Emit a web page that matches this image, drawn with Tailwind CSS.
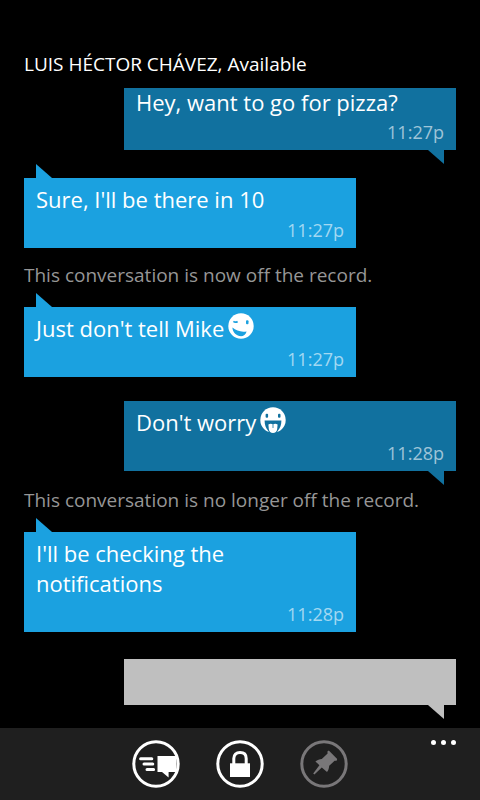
<!DOCTYPE html>
<html lang="en">
<head>
<meta charset="utf-8">
<meta name="viewport" content="width=device-width, initial-scale=1">
<title>Conversation</title>
<script src="https://cdn.jsdelivr.net/npm/@tailwindcss/browser@4"></script>
</head>
<body class="bg-black text-white font-['Open_Sans','Noto_Sans',sans-serif]">
<div class="flex min-h-screen flex-col">
  <header class="px-6 pt-[50px] pb-[10px]">
    <h1 class="text-[19px] leading-7">LUIS HÉCTOR CHÁVEZ, Available</h1>
  </header>

  <main class="flex grow flex-col px-6">
    <div class="flex flex-col">
      <article class="relative mb-[14px] ml-auto w-[332px] bg-[#11719f] px-3 pb-0.5">
        <p class="text-[22px] leading-7">Hey, want to go for pizza?</p>
        <time class="block text-right text-[18px] leading-8 text-white/60">11:27p</time>
        <svg class="absolute top-full right-3 h-[14px] w-4" viewBox="0 0 16 14" aria-hidden="true"><path d="M0 0H16V14Z" fill="#11719f"/></svg>
      </article>

      <article class="relative mt-[14px] w-[332px] bg-[#1ba1e0] px-3 pt-1.5 pb-0.5">
        <svg class="absolute bottom-full left-3 h-[14px] w-4" viewBox="0 0 16 14" aria-hidden="true"><path d="M0 0V14H16Z" fill="#1ba1e0"/></svg>
        <p class="text-[22px] leading-[30px]">Sure, I'll be there in 10</p>
        <time class="block text-right text-[18px] leading-8 text-white/60">11:27p</time>
      </article>

      <p class="mt-3 text-[19px] leading-[30px] text-[#969696]">This conversation is now off the record.</p>

      <article class="relative mt-[17px] w-[332px] bg-[#1ba1e0] px-3 pt-1.5 pb-0.5">
        <svg class="absolute bottom-full left-3 h-[14px] w-4" viewBox="0 0 16 14" aria-hidden="true"><path d="M0 0V14H16Z" fill="#1ba1e0"/></svg>
        <p class="flex gap-1 text-[22px] leading-[30px]">Just don't tell Mike
          <svg class="h-[26px] w-[26px]" viewBox="0 0 26 26" role="img" aria-label="winking smile">
            <circle cx="13" cy="13" r="12.7" fill="#fff"/>
            <path d="M5.4 8.4Q7.4 10 9.6 8.4" fill="none" stroke="#1ba1e0" stroke-width="1.8"/>
            <rect x="18" y="7.2" width="2.5" height="4" rx="1" fill="#1ba1e0"/>
            <path d="M4.4 14.6C8.4 18 13.4 19.4 18.6 18.4C17.8 22 14.6 23.7 11.4 23C7.4 22.2 4.6 18.8 4.4 14.6Z" fill="#1ba1e0"/>
          </svg>
        </p>
        <time class="block text-right text-[18px] leading-8 text-white/60">11:27p</time>
      </article>

      <article class="relative mt-6 mb-[14px] ml-auto w-[332px] bg-[#11719f] px-3 pt-1.5 pb-0.5">
        <p class="flex gap-1 text-[22px] leading-[30px]">Don't worry
          <svg class="h-[26px] w-[26px]" viewBox="0 0 26 26" role="img" aria-label="tongue out smile">
            <circle cx="13" cy="13" r="12.7" fill="#fff"/>
            <rect x="5.6" y="6.8" width="2.5" height="4" rx="1" fill="#11719f"/>
            <rect x="18" y="6.8" width="2.5" height="4" rx="1" fill="#11719f"/>
            <path d="M4.6 13.6H21.4C21.4 18 20.2 21.2 18 23.4L16.6 26H9.4L8 23.4C5.8 21.2 4.6 18 4.6 13.6Z" fill="#11719f"/>
            <path d="M8.4 17.4Q10.8 16.2 13 17.4Q15.2 16.2 17.6 17.4L17.2 22C17 24.4 15.2 26 13 26C10.8 26 9 24.4 8.8 22Z" fill="#fff"/>
            <path d="M13 17.4V21" stroke="#11719f" stroke-width=".8"/>
          </svg>
        </p>
        <time class="block text-right text-[18px] leading-8 text-white/60">11:28p</time>
        <svg class="absolute top-full right-3 h-[14px] w-4" viewBox="0 0 16 14" aria-hidden="true"><path d="M0 0H16V14Z" fill="#11719f"/></svg>
      </article>

      <p class="text-[19px] leading-[30px] text-[#969696]">This conversation is no longer off the record.</p>

      <article class="relative mt-[17px] w-[332px] bg-[#1ba1e0] px-3 pt-1.5 pb-0.5">
        <svg class="absolute bottom-full left-3 h-[14px] w-4" viewBox="0 0 16 14" aria-hidden="true"><path d="M0 0V14H16Z" fill="#1ba1e0"/></svg>
        <p class="text-[22px] leading-[30px]">I'll be checking the<br>notifications</p>
        <time class="block text-right text-[18px] leading-8 text-white/60">11:28p</time>
      </article>
    </div>

    <form class="relative mt-[27px] mb-[23px] ml-auto w-[332px]">
      <input type="text" aria-label="Message" class="block h-[46px] w-full bg-[#bfbfbf] px-3 text-[22px] text-black outline-none">
      <svg class="absolute top-full right-3 h-[14px] w-4" viewBox="0 0 16 14" aria-hidden="true"><path d="M0 0H16V14Z" fill="#bfbfbf"/></svg>
    </form>
  </main>

  <footer class="relative flex h-[72px] justify-center gap-9 bg-[#1f1f1f] pt-3">
    <button type="button" aria-label="Send" class="h-12 w-12">
      <svg class="h-12 w-12" viewBox="0 0 48 48">
        <circle cx="24" cy="24" r="22.2" fill="none" stroke="#fff" stroke-width="3"/>
        <path d="M8.6 18.7H19.8M12 24H20.8M15 29.6H21.6" stroke="#fff" stroke-width="3" stroke-linecap="round"/>
        <path d="M25.5 16H44.5V32H36.6V37.5L30 32H25.5Z" fill="#fff"/>
      </svg>
    </button>
    <button type="button" aria-label="Off the record" class="h-12 w-12">
      <svg class="h-12 w-12" viewBox="0 0 48 48">
        <circle cx="24" cy="24" r="22.2" fill="none" stroke="#fff" stroke-width="3"/>
        <path d="M17.8 24V18.5C17.8 14.8 20.2 12.6 24 12.6S30.2 14.8 30.2 18.5V24" fill="none" stroke="#fff" stroke-width="3"/>
        <rect x="14" y="23.3" width="20" height="13.7" fill="#fff"/>
      </svg>
    </button>
    <button type="button" aria-label="Pin" disabled class="h-12 w-12">
      <svg class="h-12 w-12" viewBox="0 0 48 48">
        <circle cx="24" cy="24" r="22.2" fill="none" stroke="#797779" stroke-width="3"/>
        <path d="M28.8 10.6L37.2 19L36.6 20.8L34.6 20.8L29.2 25.8C29 28.4 28.4 30.4 27 32L21.8 27.4L14.4 34.4L13.2 33.4L19.4 25.2L15.4 21.4C17.4 19.8 19.6 19.4 21.8 19L27.6 13.6L27.4 11.6Z" fill="#797779"/>
      </svg>
    </button>
    <button type="button" aria-label="More" class="absolute top-3 right-6 flex gap-[5px]">
      <span class="size-[5px] rounded-full bg-white"></span>
      <span class="size-[5px] rounded-full bg-white"></span>
      <span class="size-[5px] rounded-full bg-white"></span>
    </button>
  </footer>
</div>
</body>
</html>
